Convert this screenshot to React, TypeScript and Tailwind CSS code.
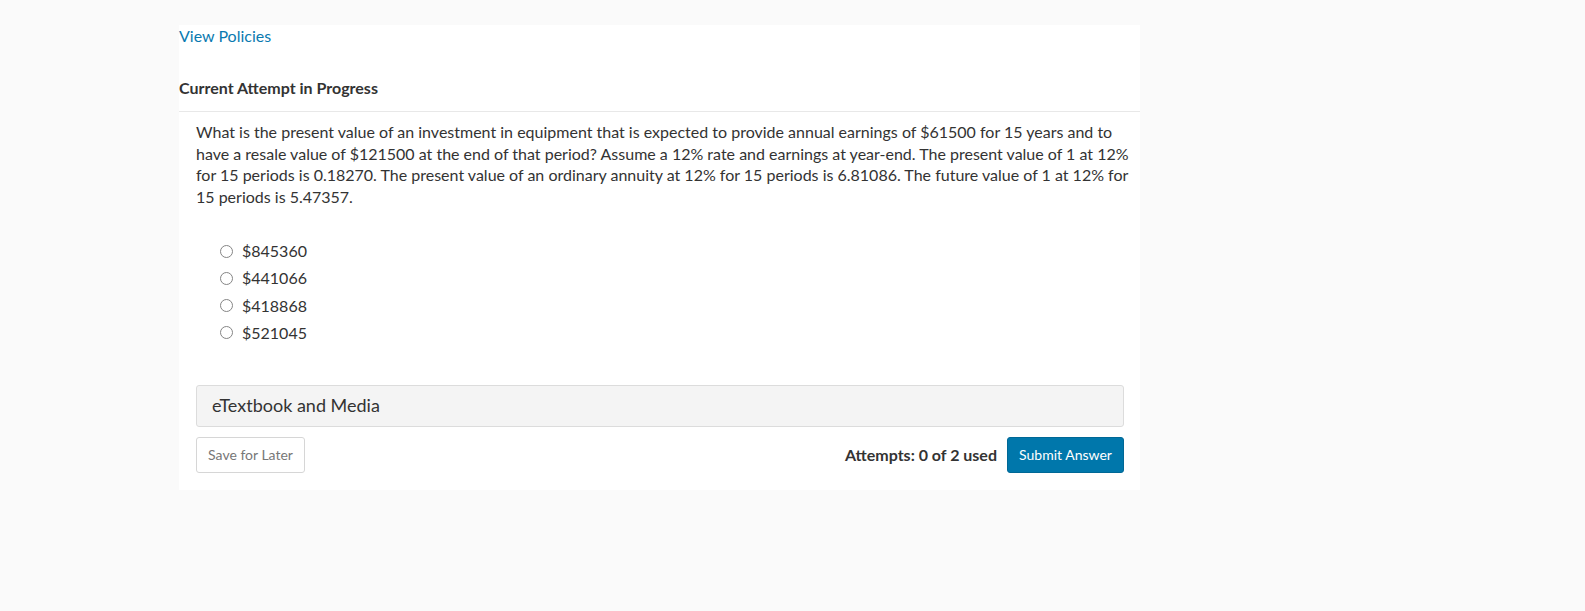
import React from 'react';

const options = ['$845360', '$441066', '$418868', '$521045'];

const questionLines = [
  'What is the present value of an investment in equipment that is expected to provide annual earnings of $61500 for 15 years and to',
  'have a resale value of $121500 at the end of that period? Assume a 12% rate and earnings at year-end. The present value of 1 at 12%',
  'for 15 periods is 0.18270. The present value of an ordinary annuity at 12% for 15 periods is 6.81086. The future value of 1 at 12% for',
  '15 periods is 5.47357.',
];

const App: React.FC = () => {
  return (
    <div className="min-h-screen bg-[#fafafa] pt-[25px] font-['Lato','Liberation_Sans',sans-serif] text-[#333]">
      <div className="ml-[179px] w-[961px] h-[465px] bg-white">
        <div className="pt-[1px] leading-[20px]">
          <a href="#" className="text-[16px] leading-[20px] text-[#0a7ab0]">View Policies</a>
        </div>
        <div className="mt-[32px] pb-[13px] border-b border-[#e8e8e8]">
          <h3 className="text-[16px] leading-[20px] font-bold text-[#333]">Current Attempt in Progress</h3>
        </div>
        <div className="pl-[17px] pr-[16px] pt-[9px]">
          <p className="text-[16px] leading-[21.6px] text-[#333]">
            {questionLines.map((l) => (
              <span key={l} className="block whitespace-nowrap">{l}</span>
            ))}
          </p>
          <div className="mt-[30px] ml-[24px] flex flex-col">
            {options.map((o) => (
              <label key={o} className="flex items-center h-[27.3px] text-[16px] text-[#333]">
                <span className="w-[13px] h-[13px] rounded-full border border-[#858585] mr-[9px]" />
                {o}
              </label>
            ))}
          </div>
          <div className="mt-[38px] h-[42px] bg-[#f4f4f4] border border-[#dcdcdc] rounded-[3px] flex items-center px-[15px]">
            <span className="text-[18px] text-[#333]">eTextbook and Media</span>
          </div>
          <div className="mt-[10px] flex items-center justify-between">
            <button className="h-[36px] w-[109px] border border-[#d6d6d6] rounded-[3px] bg-white text-[14px] text-[#777]">
              Save for Later
            </button>
            <div className="flex items-center">
              <span className="text-[16px] font-bold text-[#333] mr-[10px]">Attempts: 0 of 2 used</span>
              <button className="h-[36px] w-[117px] rounded-[3px] bg-[#0077ab] border border-[#006896] text-white text-[14px]">
                Submit Answer
              </button>
            </div>
          </div>
        </div>
      </div>
    </div>
  );
};

export default App;
